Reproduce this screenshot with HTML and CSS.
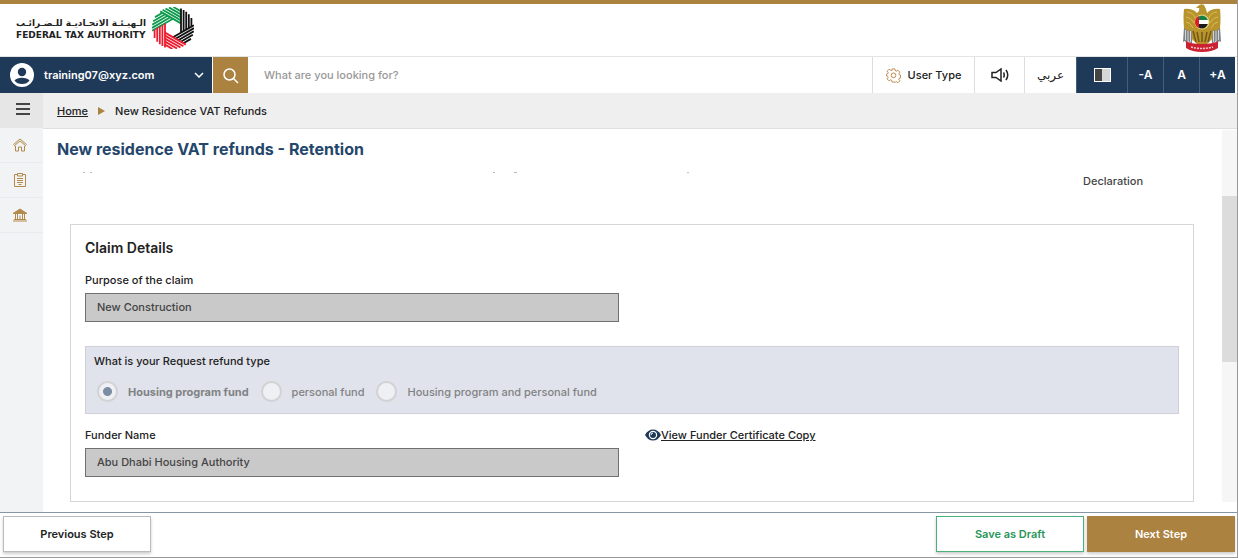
FILE: index.html
```html
<!DOCTYPE html>
<html lang="en">
<head>
  <meta charset="UTF-8" />
  <meta name="viewport" content="width=device-width, initial-scale=1.0"/>
  <title>New Residence VAT Refunds</title>
  <link rel="stylesheet" href="styles.css">
</head>
<body>
  <header class="site-header">
    <a class="brand" href="#">
      <span class="brand-text">
        <span class="brand-ar" lang="ar" dir="rtl">الـهيـئـة الاتحـاديـة للـضـرائـب</span>
        <span class="brand-en">FEDERAL TAX AUTHORITY</span>
      </span>
      <svg class="brand-logo" viewBox="-21 -21 42 42" aria-hidden="true">
        <defs>
          <g id="blade" fill="none" stroke-width="1.8">
            <path d="M-19.400 -8H4.600M-18.100 -10.600H3.100M-16.300 -13.200H1.600M-13.800 -15.800H.1M-10.100 -18.400H-1.400"/>
          </g>
        </defs>
        <use href="#blade" stroke="#0e9a4d" transform="rotate(30)"/>
        <use href="#blade" stroke="#0e9a4d" transform="rotate(-30)"/>
        <use href="#blade" stroke="#111" transform="rotate(90)"/>
        <use href="#blade" stroke="#111" transform="rotate(150)"/>
        <use href="#blade" stroke="#ee1c2e" transform="rotate(210)"/>
        <use href="#blade" stroke="#ee1c2e" transform="rotate(270)"/>
      </svg>
    </a>
    <svg class="emblem" viewBox="0 0 38 48" aria-hidden="true">
      <path d="M1 23L10 25L9 40L5 37L4 40L2 37L0 38Z" fill="#808386"/>
      <path d="M37 23L28 25L29 40L33 37L34 40L36 37L38 38Z" fill="#808386"/>
      <path d="M2.500 26v10M5 27v11M7.500 27v11M35.500 26v10M33 27v11M30.500 27v11" stroke="#d3d5d6" stroke-width="1"/>
      <path d="M15 2Q18 -1 21 1Q23 4 24 9Q29 4 37 5Q38 13 37 24L33 27L30 26L29 35L24 40H14L9 35L8 26L5 27L1 24Q0 13 1 5Q9 4 14 9Q17 7 16 4L13 4Z" fill="#b8942c"/>
      <path d="M4 8Q10 8 12 14M3 13Q8 13 11 19M3 18Q7 18 10 24M34 8Q28 8 26 14M35 13Q30 13 27 19M35 18Q31 18 28 24" fill="none" stroke="#d9bd58" stroke-width="1"/>
      <path d="M10 27L13 38M14 28L16 38M28 27L25 38M24 28L22 38M19 28V38" stroke="#725919" stroke-width="1.500"/>
      <circle cx="19" cy="18" r="7.500" fill="#e9ce67"/>
      <circle cx="19" cy="18" r="6.500" fill="#fff"/>
      <path d="M15 13A6.500 6.500 0 0 1 23 13L25 16H15Z" fill="#168047"/>
      <path d="M15 20H25L23 23A6.500 6.500 0 0 1 15 23Z" fill="#1b1b1b"/>
      <path d="M16 12A6.500 6.500 0 0 0 16 24Z" fill="#d91d2b"/>
      <path d="M3 37Q7 40 19 40T35 37L35 44Q29 48 19 48T3 44Z" fill="#cc2131"/>
      <path d="M8 43Q19 46 30 43" fill="none" stroke="#f2c6ca" stroke-width="1.600" stroke-dasharray="2 1"/>
    </svg>
  </header>

  <nav class="toolbar">
    <button class="account" type="button">
      <svg class="avatar" viewBox="0 0 24 24" aria-hidden="true">
        <circle cx="12" cy="12" r="12" fill="#fff"/>
        <circle cx="12" cy="9" r="4.200" fill="#1f3a58"/>
        <path d="M4.500 17.500Q7 14.800 12 14.800T19.500 17.500Q17 21 12 21T4.500 17.500Z" fill="#1f3a58"/>
      </svg>
      <span class="account-name">training07@xyz.com</span>
      <svg class="chevron" viewBox="0 0 10 6" aria-hidden="true"><path d="M1 1L5 5L9 1" fill="none" stroke="#fff" stroke-width="1.500"/></svg>
    </button>
    <button class="search-button" type="button" aria-label="Search">
      <svg viewBox="0 0 16 16" aria-hidden="true"><circle cx="6.500" cy="6.500" r="5.500"/><path d="M10.500 10.500L15 15"/></svg>
    </button>
    <input class="search-input" type="text" aria-label="Search" placeholder="What are you looking for?">
    <button class="tool user-type" type="button">
      <svg class="gear" viewBox="0 0 16 16" aria-hidden="true">
        <path d="M6.500 1h3l.4 1.900 1.100.5 1.700-1.100 2.100 2.100-1.100 1.600.5 1.200 1.300.3v3l-1.300.3-.5 1.200 1.100 1.600-2.100 2.100-1.700-1.100-1.100.5L9.500 15h-3l-.4-1.900-1.100-.5-1.700 1.100-2.100-2.100L2.300 10l-.5-1.200L.5 8.500V6.500l1.300-.3.500-1.200-1.100-1.600 2.100-2.100L5 2.400l1.100.5z"/>
        <circle cx="8" cy="7.800" r="2.500"/>
      </svg>
      User Type
    </button>
    <button class="tool sound" type="button" aria-label="Read aloud">
      <svg viewBox="0 0 18 14" aria-hidden="true"><path d="M1 4.500H5L10 1V13L5 9.500H1ZM12.500 4.500Q14 7 12.500 9.500M15 2Q18.500 7 15 12"/></svg>
    </button>
    <button class="tool arabic" type="button" lang="ar">عربي</button>
    <button class="tool dark contrast" type="button" aria-label="Contrast"><span class="contrast-icon"></span></button>
    <button class="tool dark" type="button">-A</button>
    <button class="tool dark" type="button">A</button>
    <button class="tool dark" type="button">+A</button>
  </nav>

  <div class="workspace">
    <aside class="sidebar">
      <button class="menu-button" type="button" aria-label="Menu">
        <svg viewBox="0 0 14 12" aria-hidden="true"><path d="M0 1H14M0 6H14M0 11H14" stroke="#444" stroke-width="2"/></svg>
      </button>
      <a class="side-link" href="#" aria-label="Home">
        <svg viewBox="0 0 14 14" aria-hidden="true"><path d="M.5 6.500L7 1L13.500 6.500M1 8L7 3L13 8M2.500 8V13H5.500V9H8.500V13H11.500V8"/></svg>
      </a>
      <a class="side-link" href="#" aria-label="Forms">
        <svg viewBox="0 0 14 14" aria-hidden="true"><path d="M4.500 1.500H1.500V13.500H12.500V1.500H9.500M4.500 .5H9.500V3H4.500ZM4 5.500H10M4 7.500H10M4 9.500H10M5.500 11.500H8.500"/></svg>
      </a>
      <a class="side-link" href="#" aria-label="Tax">
        <svg viewBox="0 0 14 14" aria-hidden="true">
          <path d="M0 5.500L7 1L14 5.500Z" fill="#b28a4c"/>
          <path d="M0 13H14M1 11.500H13M2.500 6V11M4.500 6V11M7 7.500V11M9.500 6V11M11.500 6V11"/>
        </svg>
      </a>
    </aside>

    <main class="page">
      <div class="breadcrumb">
        <a href="#">Home</a>
        <span class="crumb-arrow"></span>
        <span>New Residence VAT Refunds</span>
      </div>
      <div class="page-body">
        <div class="content">
          <h1>New residence VAT refunds - Retention</h1>
          <div class="steps">
            <svg class="steps-edge" aria-hidden="true" fill="#bbb"><rect x="26" width="2" height="1"/><rect x="33" width="2" height="1"/><rect x="436" width="2" height="1"/><rect x="457" width="3" height="1"/><rect x="630" width="2" height="1"/></svg>
            <span class="step">Declaration</span>
          </div>
          <section class="card">
            <h2>Claim Details</h2>
            <div class="row">
              <div class="field">
                <label for="purpose">Purpose of the claim</label>
                <input id="purpose" type="text" value="New Construction" disabled>
              </div>
            </div>
            <div class="refund-type" role="radiogroup" aria-labelledby="refundTitle">
              <p id="refundTitle">What is your Request refund type</p>
              <div class="options">
                <label class="selected"><input type="radio" name="fund" checked disabled>Housing program fund</label>
                <label><input type="radio" name="fund" disabled>personal fund</label>
                <label><input type="radio" name="fund" disabled>Housing program and personal fund</label>
              </div>
            </div>
            <div class="row">
              <div class="field">
                <label for="funder">Funder Name</label>
                <input id="funder" type="text" value="Abu Dhabi Housing Authority" disabled>
              </div>
              <div class="certificate">
                <svg viewBox="0 0 16 12" aria-hidden="true">
                  <path d="M0 6Q3 .5 8 .5T16 6Q13 11.500 8 11.500T0 6Z" fill="#1f3a58"/>
                  <circle cx="8" cy="6" r="3.600" fill="none" stroke="#fff" stroke-width="1.200"/>
                  <path d="M6 6Q6 4 8 4" fill="none" stroke="#fff"/>
                </svg>
                <a href="#">View Funder Certificate Copy</a>
              </div>
            </div>
          </section>
        </div>
        <div class="scroll-track"><div class="scroll-thumb"></div></div>
      </div>
    </main>
  </div>

  <footer class="actions">
    <button class="action" type="button">Previous Step</button>
    <button class="action draft" type="button">Save as Draft</button>
    <button class="action next" type="button">Next Step</button>
  </footer>
</body>
</html>
```
FILE: styles.css
```css
* {
  box-sizing: border-box;
}
body {
  display: flex;
  flex-direction: column;
  min-height: 100vh;
  margin: 0;
  font-family: Inter, "DejaVu Sans", sans-serif;
  font-size: 11px;
  font-weight: 500;
  line-height: 14px;
  color: #222;
  background-color: #fff;
  border-right: 1px solid #999;
  border-bottom: 1px solid #999;
}
button, input {
  font: inherit;
  color: inherit;
  margin: 0;
}
button {
  cursor: pointer;
}
a {
  color: inherit;
}
.site-header {
  display: flex;
  justify-content: space-between;
  height: 57px;
  padding: 0 16px;
  border-top: 4px solid #ac8240;
  border-bottom: 1px solid #e4e4e4;
}
.brand {
  display: flex;
  align-items: center;
  gap: 6px;
  padding-bottom: 4px;
  text-decoration: none;
}
.brand-text {
  display: flex;
  flex-direction: column;
  font-family: "DejaVu Sans", sans-serif;
  font-weight: bold;
}
.brand-ar {
  font-size: 9px;
}
.brand-en {
  font-size: 9px;
  line-height: 10px;
}
.brand-logo {
  width: 42px;
  height: 42px;
}
.emblem {
  width: 38px;
  height: 48px;
}

.toolbar {
  display: flex;
  height: 36px;
  padding-right: 2px;
}
.account {
  display: flex;
  align-items: center;
  gap: 10px;
  width: 212px;
  padding: 0 8px 0 10px;
  border: none;
  background-color: #1f3a58;
  color: white;
  font-weight: 600;
}
.avatar {
  width: 24px;
  height: 24px;
}
.account-name {
  flex: 1;
  text-align: left;
}
.chevron {
  width: 10px;
  height: 6px;
}
.search-button {
  width: 35px;
  margin-left: 1px;
  padding: 4px 0 0;
  border: none;
  background-color: #ac8240;
}
.search-button svg {
  width: 16px;
  height: 16px;
  fill: none;
  stroke: white;
  stroke-width: 1.5;
}
.search-input {
  flex: 1;
  min-width: 0;
  padding: 0 16px;
  border: none;
}
.search-input::placeholder {
  color: #999;
}
.tool {
  display: flex;
  align-items: center;
  justify-content: center;
  gap: 7px;
  width: 50px;
  padding: 0;
  border: none;
  border-left: 1px solid #ddd;
  background-color: white;
}
.user-type {
  width: 102px;
}
.gear {
  width: 15px;
  height: 15px;
  fill: none;
  stroke: #b98545;
}
.sound svg {
  width: 18px;
  height: 14px;
  fill: none;
  stroke: #222;
  stroke-width: 1.5;
}
.arabic {
  width: 52px;
  font-family: "DejaVu Sans", sans-serif;
  font-size: 12px;
}
.dark {
  width: 36px;
  border-left-color: #435d7a;
  background-color: #1f3a58;
  color: white;
  font-size: 12px;
  font-weight: 600;
}
.contrast {
  width: 51px;
}
.contrast-icon {
  width: 17px;
  height: 14px;
  border: 1px solid white;
  background: linear-gradient(90deg, #444 50%, #d6d6d6 50%);
}

.workspace {
  display: flex;
  flex: 1;
}
.sidebar {
  display: flex;
  flex-direction: column;
  width: 43px;
  background-color: #f2f3f5;
}
.menu-button {
  height: 35px;
  padding: 0 0 0 3px;
  border: none;
  background-color: #e6e6e6;
}
.menu-button svg {
  width: 14px;
  height: 12px;
}
.side-link {
  display: flex;
  align-items: center;
  justify-content: center;
  height: 35px;
  padding-right: 4px;
  border-bottom: 1px solid #e8eaed;
}
.side-link svg {
  width: 14px;
  height: 14px;
  fill: none;
  stroke: #b28a4c;
}
.page {
  display: flex;
  flex-direction: column;
  flex: 1;
}
.breadcrumb {
  display: flex;
  align-items: center;
  gap: 10px;
  height: 36px;
  padding: 0 14px;
  border-bottom: 1px solid #e0e0e0;
  background-color: #efefef;
}
.crumb-arrow {
  border: 4px solid transparent;
  border-left: 7px solid #ac8240;
  border-right: none;
}
.page-body {
  display: flex;
  flex: 1;
  padding-bottom: 10px;
}
.content {
  display: flex;
  flex-direction: column;
  flex: 1;
  padding: 0 28px 0 14px;
}
h1 {
  margin: 0;
  padding: 10px 0 13px;
  font-size: 16px;
  font-weight: 700;
  line-height: 20px;
  color: #24466a;
}
.steps {
  display: flex;
  flex-direction: column;
  align-items: flex-end;
  height: 52px;
  padding-right: 51px;
  color: #444;
}
.steps-edge {
  align-self: flex-start;
  width: 700px;
  height: 2px;
}
.card {
  flex: 1;
  margin-left: 13px;
  padding: 14px;
  border: 1px solid #d6d6d6;
}
h2 {
  margin: 0 0 16px;
  font-size: 14px;
  font-weight: 600;
  line-height: 18px;
  color: #222;
}
.row {
  display: grid;
  grid-template-columns: 1fr 1fr;
  gap: 26px;
}
.field {
  display: flex;
  flex-direction: column;
  gap: 6px;
}
.field input {
  height: 29px;
  padding: 0 11px 2px;
  border: 1px solid #707070;
  background-color: #c9c9c9;
  color: #444;
}
.refund-type {
  margin: 24px 0 14px;
  padding: 7px 8px 11px;
  border: 1px solid #cdd0d5;
  background-color: #e0e3eb;
}
.refund-type p {
  margin: 0 0 13px;
}
.options {
  display: flex;
  gap: 12px;
  padding-left: 3px;
  color: #808285;
}
.options label {
  display: flex;
  align-items: center;
  gap: 10px;
}
.options .selected {
  font-weight: 700;
}
.options input {
  appearance: none;
  width: 21px;
  height: 21px;
  border: 2px solid #d1d2d4;
  border-radius: 50%;
  background-color: #eff0f4;
}
.options input:checked {
  background-image: radial-gradient(circle, #7b8da3 4px, transparent 5px);
}
.certificate {
  display: flex;
  align-items: center;
  height: 14px;
}
.certificate svg {
  width: 16px;
  height: 12px;
}
.scroll-track {
  width: 15px;
  margin-top: 1px;
  padding-top: 66px;
  background-color: #f6f6f6;
}
.scroll-thumb {
  height: 166px;
  background-color: #dcdcdc;
}

.actions {
  display: flex;
  gap: 3px;
  padding: 3px 2px 5px 3px;
  border-top: 1px solid #8795a5;
}
.action {
  width: 148px;
  height: 36px;
  border: 1px solid #bbb;
  background-color: white;
  box-shadow: 0 2px 3px rgba(0, 0, 0, 0.2);
  font-weight: 600;
}
.draft {
  margin-left: auto;
  border-color: #4cb07c;
  color: #279558;
}
.next {
  border-color: #ac8240;
  background-color: #ac8240;
  color: white;
}
```
